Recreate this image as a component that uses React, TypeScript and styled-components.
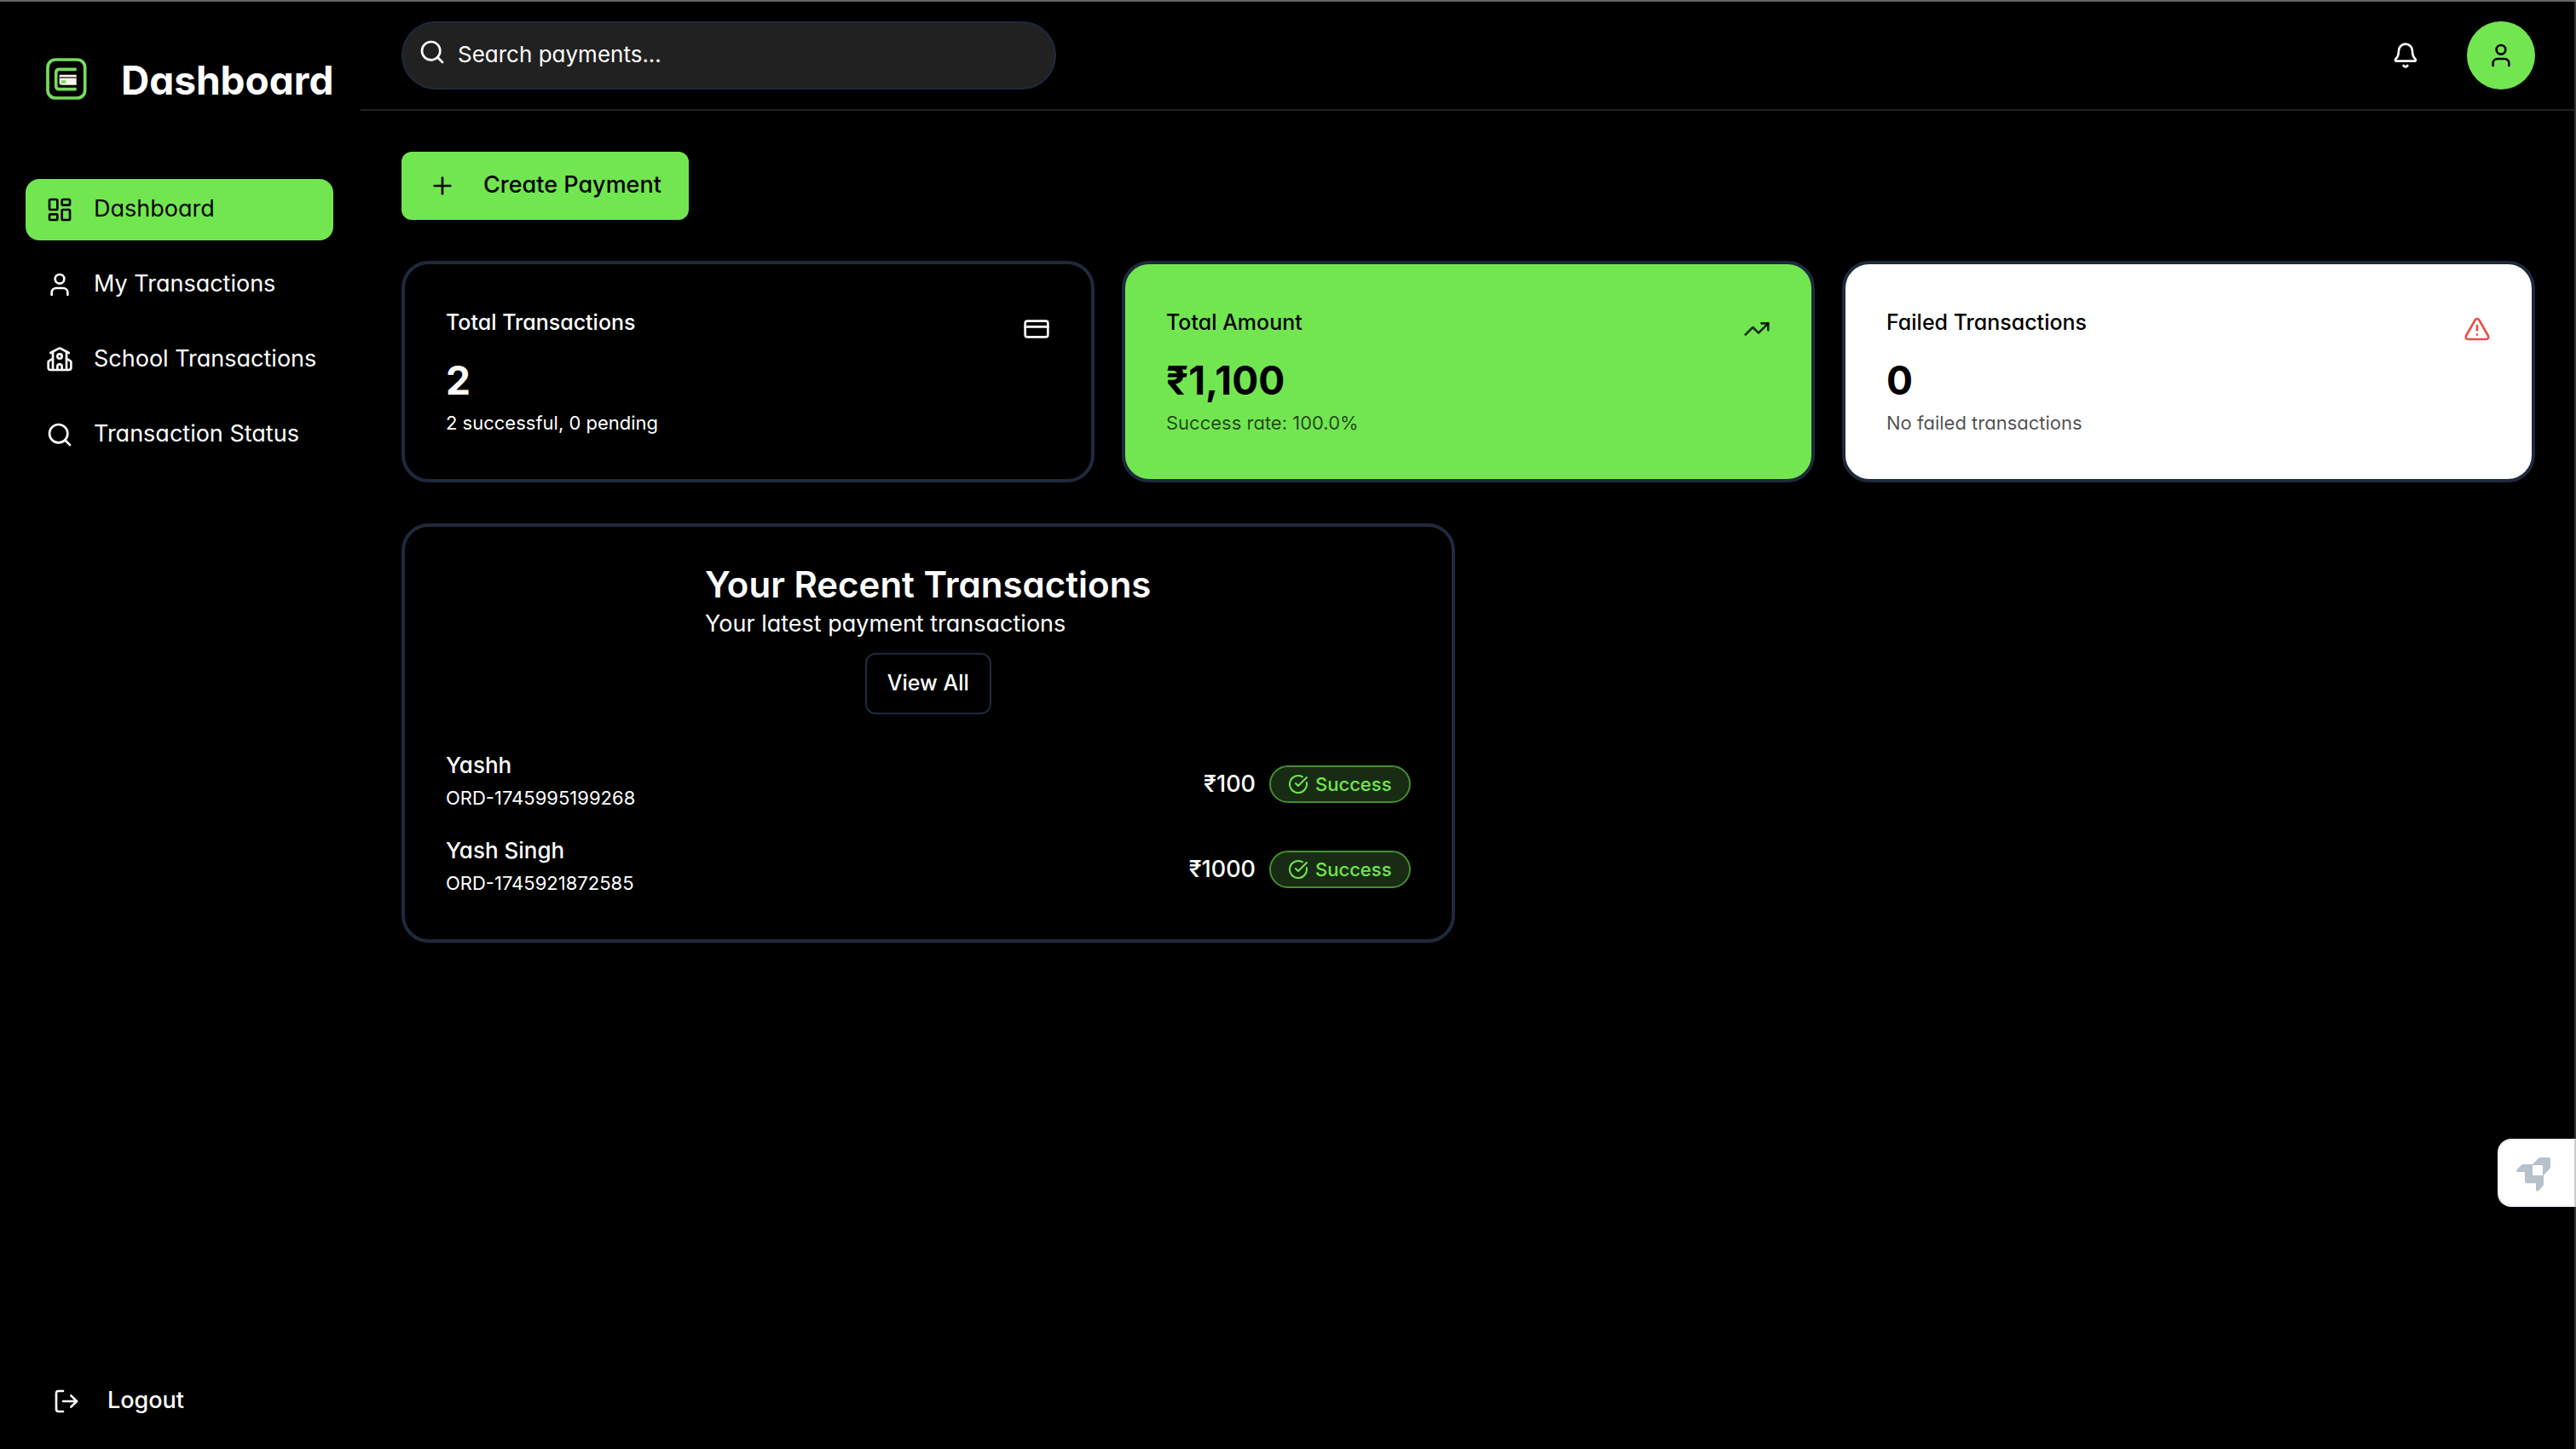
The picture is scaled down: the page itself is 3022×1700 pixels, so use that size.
import React from "react";
import styled, { createGlobalStyle } from "styled-components";
import {
  Bell,
  CircleCheckBig,
  CreditCard,
  LayoutDashboard,
  LogOut,
  LucideIcon,
  Plus,
  School,
  Search,
  TrendingUp,
  TriangleAlert,
  User,
} from "lucide-react";

const green = "#71e650";
const slate = "#1e293b";

const GlobalStyle = createGlobalStyle`
  *, *::before, *::after { box-sizing: border-box; }
  body {
    margin: 0;
    background: #000;
    color: #fff;
    font-family: Inter, "Liberation Sans", sans-serif;
    font-size: 27px;
    line-height: 40px;
    font-feature-settings: "cv11";
    -webkit-font-smoothing: antialiased;
  }
  h1, h2, h3, p, ul { margin: 0; padding: 0; }
  button, input { font: inherit; color: inherit; font-feature-settings: inherit; }
  svg { display: block; flex: none; }
`;

const Shell = styled.div`
  display: grid;
  grid-template-columns: 423px 1fr;
  min-height: 100vh;
  border-top: 2px solid #666;
`;

const Sidebar = styled.aside`
  display: flex;
  flex-direction: column;
  padding: 66px 32px 16px 30px;
`;

const Brand = styled.div`
  display: flex;
  align-items: flex-start;
  gap: 40px;
  padding-left: 24px;
`;

const BrandName = styled.h1`
  font-size: 46px;
  line-height: 52px;
  font-weight: 700;
`;

const Nav = styled.nav`
  display: flex;
  flex-direction: column;
  gap: 16px;
  margin-top: 90px;
`;

const Label = styled.span`
  padding-bottom: 2px;
  white-space: nowrap;
`;

const NavLink = styled.a<{ $active?: boolean }>`
  display: flex;
  align-items: center;
  gap: 24px;
  height: 72px;
  padding: 0 24px;
  border-radius: 16px;
  text-decoration: none;
  background: ${(p) => (p.$active ? green : "transparent")};
  color: ${(p) => (p.$active ? "#000" : "#fff")};
`;

const LogoutButton = styled.button`
  display: flex;
  align-items: center;
  gap: 32px;
  height: 80px;
  margin-top: auto;
  padding: 0 32px;
  border: 0;
  background: transparent;
  font-weight: 500;
  cursor: pointer;
`;

const Page = styled.div`
  display: flex;
  flex-direction: column;
  min-width: 0;
  border-right: 2px solid #333;
`;

const Header = styled.header`
  display: flex;
  align-items: center;
  justify-content: space-between;
  height: 128px;
  padding: 0 46px 0 48px;
  border-bottom: 2px solid #212121;
`;

const SearchBox = styled.label`
  display: flex;
  align-items: center;
  gap: 14px;
  flex: 0 1 768px;
  height: 80px;
  padding: 0 18px;
  border: 2px solid ${slate};
  border-radius: 40px;
  background: #212121;

  svg {
    margin-bottom: 8px;
  }
`;

const SearchInput = styled.input`
  flex: 1;
  min-width: 0;
  padding: 0 0 2px;
  border: 0;
  outline: 0;
  background: transparent;
  font-size: 26px;

  &::placeholder {
    color: #fff;
    opacity: 1;
  }
`;

const HeaderActions = styled.div`
  display: flex;
  gap: 32px;
`;

const RoundButton = styled.button<{ $filled?: boolean }>`
  display: grid;
  place-items: center;
  width: 80px;
  height: 80px;
  padding: 0;
  border: 0;
  border-radius: 50%;
  background: ${(p) => (p.$filled ? green : "transparent")};
  color: ${(p) => (p.$filled ? "#000" : "#fff")};
  cursor: pointer;
`;

const Content = styled.main`
  display: flex;
  flex-direction: column;
  gap: 48px;
  padding: 48px 46px 48px 48px;
`;

const CreateButton = styled.button`
  display: flex;
  align-items: center;
  align-self: flex-start;
  gap: 32px;
  height: 80px;
  padding: 0 32px;
  border: 0;
  border-radius: 12px;
  background: ${green};
  color: #000;
  font-weight: 500;
  cursor: pointer;
`;

const Stats = styled.section`
  display: grid;
  grid-template-columns: repeat(3, 1fr);
  gap: 32px;
`;

const Card = styled.article<{ $bg: string; $fg: string }>`
  display: flex;
  justify-content: space-between;
  padding: 48px;
  border: 4px solid ${slate};
  border-radius: 32px;
  background: ${(p) => p.$bg};
  color: ${(p) => p.$fg};
`;

const CardTitle = styled.h3`
  font-size: 25px;
  line-height: 40px;
  font-weight: 500;
`;

const CardValue = styled.p`
  margin: 24px 0 8px;
  font-size: 46px;
  line-height: 48px;
  font-weight: 700;
`;

const CardNote = styled.p<{ $color: string }>`
  font-size: 22px;
  line-height: 36px;
  color: ${(p) => p.$color};
`;

const CardIcon = styled.span<{ $color: string }>`
  padding-top: 12px;
  color: ${(p) => p.$color};
`;

const Panels = styled.div`
  display: grid;
  grid-template-columns: repeat(2, 1fr);
  gap: 32px;
`;

const Panel = styled.section`
  display: flex;
  flex-direction: column;
  gap: 40px;
  padding: 48px;
  border: 4px solid ${slate};
  border-radius: 32px;
`;

const PanelHead = styled.div`
  display: flex;
  flex-direction: column;
  align-items: center;
  gap: 8px;
`;

const PanelTitle = styled.h2`
  font-size: 42px;
  line-height: 40px;
  font-weight: 600;
`;

const PanelNote = styled.p`
  padding: 6px 0;
`;

const OutlineButton = styled.button`
  display: flex;
  align-items: center;
  height: 72px;
  padding: 0 24px;
  border: 2px solid ${slate};
  border-radius: 12px;
  background: #000;
  font-size: 25px;
  font-weight: 500;
  cursor: pointer;
`;

const Rows = styled.ul`
  display: flex;
  flex-direction: column;
  gap: 24px;
  list-style: none;
`;

const Row = styled.li`
  display: flex;
  align-items: center;
  justify-content: space-between;
`;

const Payer = styled.p`
  font-size: 26px;
  font-weight: 500;
`;

const OrderId = styled.p`
  font-size: 22px;
  line-height: 36px;
`;

const Outcome = styled.div`
  display: flex;
  align-items: center;
  gap: 16px;
  padding-top: 8px;
  font-weight: 500;
`;

const Badge = styled.span`
  display: flex;
  align-items: center;
  gap: 8px;
  height: 44px;
  padding: 0 20px;
  border: 2px solid #458f31;
  border-radius: 22px;
  background: #172c12;
  color: ${green};
  font-size: 22px;
  line-height: 36px;
`;

const Launcher = styled.button`
  position: fixed;
  right: 0;
  top: 1336px;
  display: flex;
  align-items: center;
  width: 92px;
  height: 80px;
  padding: 4px 20px 0;
  border: 2px solid #eceff4;
  border-right-color: #ccc;
  border-radius: 16px 0 0 16px;
  background: #fff;
  cursor: pointer;
`;

const Logo = () => (
  <svg width="48" height="49" viewBox="0 0 144 147" fill="none" aria-hidden="true">
    <rect x="6" y="6" width="131" height="135" rx="27" stroke="#76dc5d" strokeWidth="11" />
    <path d="M107 40H47Q35 40 35 52V98Q35 110 47 110H107" stroke="#76dc5d" strokeWidth="11" />
    <path d="M50 59H107V95H56Q47 95 47 88V62Q47 59 50 59Z" fill="#faf6ec" />
    <path d="M47 69H107" stroke="#222" strokeWidth="4" />
    <rect x="53" y="79" width="17" height="10" rx="2" fill="#76dc5d" />
  </svg>
);

const Rocket = () => (
  <svg width="40" height="40" viewBox="0 0 120 120" aria-hidden="true">
    <path
      fill="#b6c1cb"
      fillRule="evenodd"
      d="M2 43 16 28Q20 24 26 24H57L77 4Q81 0 87 0H114Q120 0 120 6V32Q120 37 116 41L96 62V94Q96 99 92 103L78 117Q69 123 69 112V91H38Q30 91 30 82V51H5Q-3 49 2 43ZM61 27Q57 27 57 31V59Q57 63 61 63H89Q93 63 93 59V31Q93 27 89 27Z"
    />
  </svg>
);

const links: { icon: LucideIcon; text: string; active?: boolean }[] = [
  { icon: LayoutDashboard, text: "Dashboard", active: true },
  { icon: User, text: "My Transactions" },
  { icon: School, text: "School Transactions" },
  { icon: Search, text: "Transaction Status" },
];

const stats = [
  {
    title: "Total Transactions",
    value: "2",
    note: "2 successful, 0 pending",
    icon: CreditCard,
    bg: "#000",
    fg: "#fff",
    noteColor: "#fff",
    iconColor: "#fff",
  },
  {
    title: "Total Amount",
    value: "₹1,100",
    note: "Success rate: 100.0%",
    icon: TrendingUp,
    bg: green,
    fg: "#000",
    noteColor: "rgba(0, 0, 0, 0.7)",
    iconColor: "rgba(0, 0, 0, 0.8)",
  },
  {
    title: "Failed Transactions",
    value: "0",
    note: "No failed transactions",
    icon: TriangleAlert,
    bg: "#fff",
    fg: "#000",
    noteColor: "rgba(0, 0, 0, 0.7)",
    iconColor: "#e5504c",
  },
];

const payments = [
  { payer: "Yashh", order: "ORD-1745995199268", amount: "₹100" },
  { payer: "Yash Singh", order: "ORD-1745921872585", amount: "₹1000" },
];

export default function App() {
  return (
    <>
      <GlobalStyle />
      <Shell>
        <Sidebar>
          <Brand>
            <Logo />
            <BrandName>Dashboard</BrandName>
          </Brand>
          <Nav aria-label="Main">
            {links.map(({ icon: Icon, text, active }) => (
              <NavLink key={text} href="#" $active={active}>
                <Icon size={32} />
                <Label>{text}</Label>
              </NavLink>
            ))}
          </Nav>
          <LogoutButton type="button">
            <LogOut size={32} />
            <Label>Logout</Label>
          </LogoutButton>
        </Sidebar>

        <Page>
          <Header>
            <SearchBox>
              <Search size={32} />
              <SearchInput type="search" placeholder="Search payments..." aria-label="Search payments" />
            </SearchBox>
            <HeaderActions>
              <RoundButton type="button" aria-label="Notifications">
                <Bell size={32} />
              </RoundButton>
              <RoundButton type="button" aria-label="Account" $filled>
                <User size={32} />
              </RoundButton>
            </HeaderActions>
          </Header>

          <Content>
            <CreateButton type="button">
              <Plus size={32} />
              <Label>Create Payment</Label>
            </CreateButton>

            <Stats>
              {stats.map(({ icon: Icon, ...s }) => (
                <Card key={s.title} $bg={s.bg} $fg={s.fg}>
                  <div>
                    <CardTitle>{s.title}</CardTitle>
                    <CardValue>{s.value}</CardValue>
                    <CardNote $color={s.noteColor}>{s.note}</CardNote>
                  </div>
                  <CardIcon $color={s.iconColor}>
                    <Icon size={32} />
                  </CardIcon>
                </Card>
              ))}
            </Stats>

            <Panels>
              <Panel>
                <PanelHead>
                  <div>
                    <PanelTitle>Your Recent Transactions</PanelTitle>
                    <PanelNote>Your latest payment transactions</PanelNote>
                  </div>
                  <OutlineButton type="button">
                    <Label>View All</Label>
                  </OutlineButton>
                </PanelHead>
                <Rows>
                  {payments.map((p) => (
                    <Row key={p.order}>
                      <div>
                        <Payer>{p.payer}</Payer>
                        <OrderId>{p.order}</OrderId>
                      </div>
                      <Outcome>
                        <span>{p.amount}</span>
                        <Badge>
                          <CircleCheckBig size={24} />
                          Success
                        </Badge>
                      </Outcome>
                    </Row>
                  ))}
                </Rows>
              </Panel>
            </Panels>
          </Content>
        </Page>
      </Shell>
      <Launcher type="button" aria-label="Open launcher">
        <Rocket />
      </Launcher>
    </>
  );
}
